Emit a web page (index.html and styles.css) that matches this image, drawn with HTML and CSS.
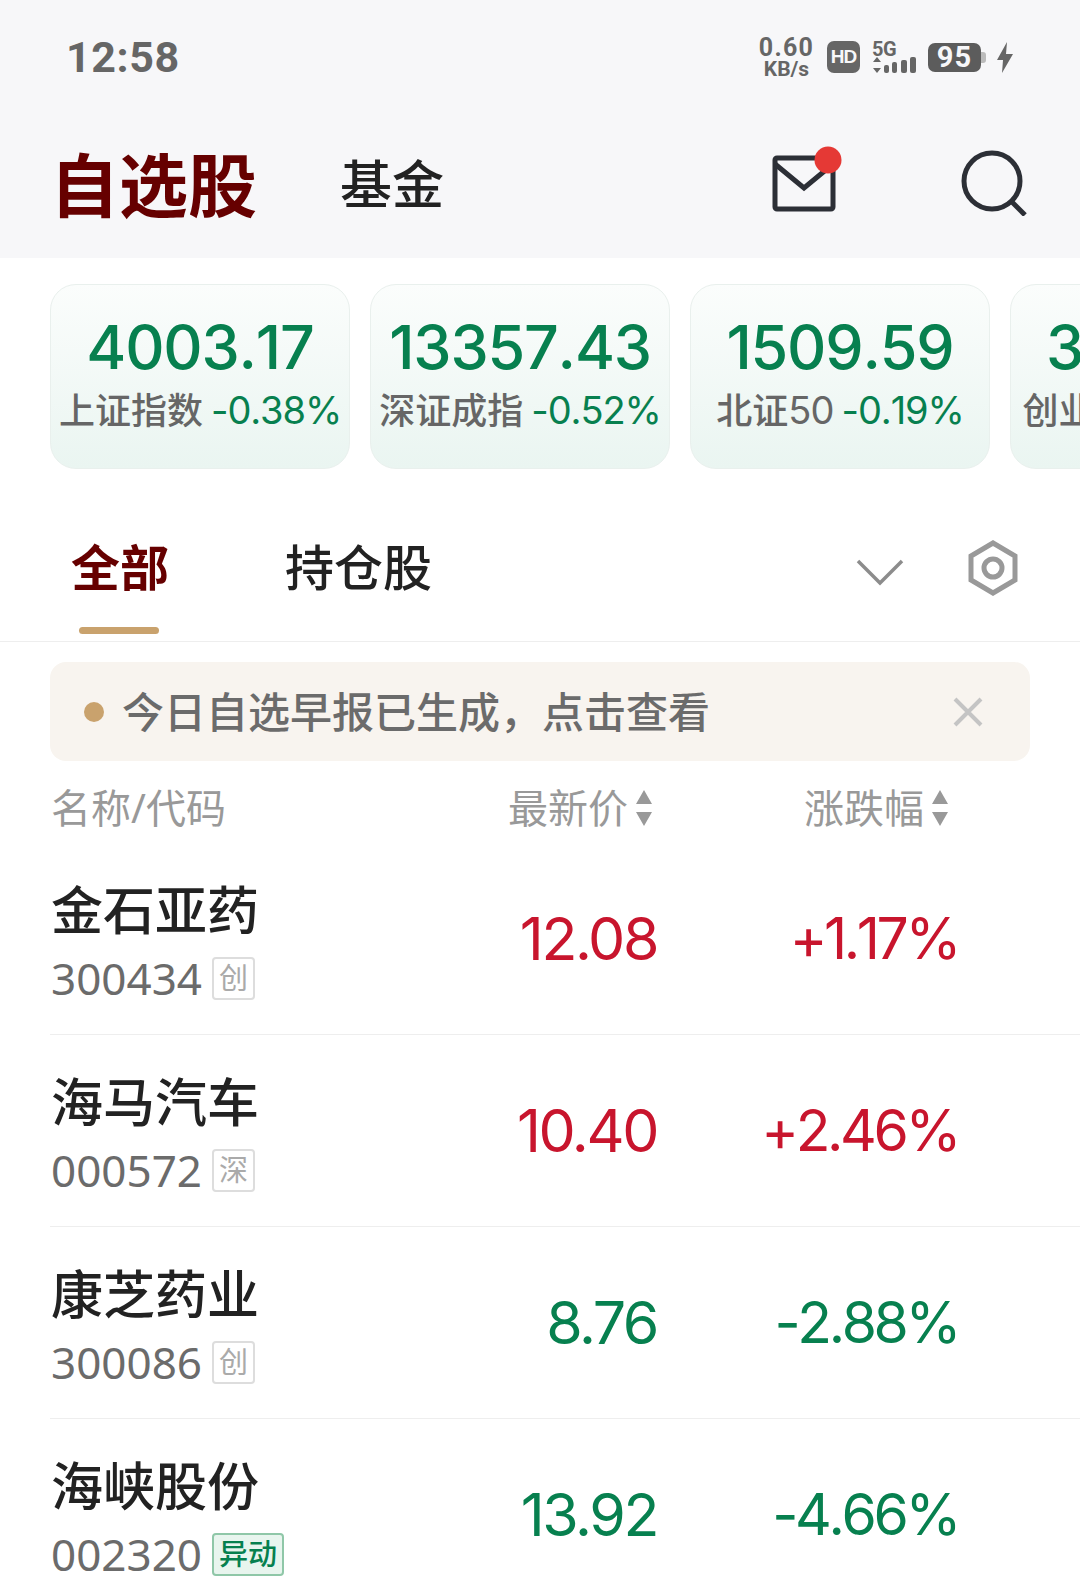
FILE: index.html
```html
<!DOCTYPE html>
<html lang="zh">
<head>
<meta charset="utf-8">
<title>自选股</title>
<link rel="stylesheet" href="styles.css">
</head>
<body>
<div class="page">
  <header class="top">
    <div class="status">
      <span class="time">12:58</span>
      <div class="sys">
        <div class="speed"><span class="speed-a">0.60</span><span class="speed-b">KB/s</span></div>
        <span class="hd">HD</span>
        <div class="net">
          <span class="five">5G</span>
          <svg class="bars" width="44" height="16" viewBox="0 0 44 16"><path class="ic-fill" d="M5 0l4 5H1zM5 16l4-5H1z"/><rect class="ic-fill" x="12" y="8" width="5" height="8" rx="2"/><rect class="ic-fill" x="20" y="5" width="5" height="11" rx="2"/><rect class="ic-fill" x="29" y="3" width="6" height="13" rx="2"/><rect class="ic-fill" x="38" y="0" width="6" height="16" rx="2"/></svg>
        </div>
        <div class="batt"><span class="batt-body">95</span><span class="batt-tip"></span></div>
        <svg class="bolt" width="16" height="31" viewBox="0 0 16 31"><path class="ic-fill" d="M10 0L0 18h6L5 31l11-19H9z"/></svg>
      </div>
    </div>
    <div class="nav">
      <h1 class="title">自选股</h1>
      <span class="fund">基金</span>
      <svg class="mail" width="70" height="66" viewBox="0 0 70 66"><rect class="ic-line" x="3" y="12" width="58" height="51" rx="2"/><path class="ic-line" d="M3 18l29 24 29-24"/><circle class="ic-dot" cx="56" cy="14" r="13.5"/></svg>
      <svg class="search" width="66" height="66" viewBox="0 0 66 66"><circle class="ic-line" cx="31" cy="31" r="28"/><path class="ic-line" d="M50 51l14 14"/></svg>
    </div>
  </header>

  <section class="cards">
    <div class="card"><div class="num">4003.17</div><div class="sub"><span>上证指数</span> <em>-0.38%</em></div></div>
    <div class="card"><div class="num">13357.43</div><div class="sub"><span>深证成指</span> <em>-0.52%</em></div></div>
    <div class="card"><div class="num">1509.59</div><div class="sub"><span>北证<b class="sub-num">50</b></span> <em>-0.19%</em></div></div>
    <div class="card"><div class="num">3198.45</div><div class="sub"><span>创业板指</span> <em>-0.41%</em></div></div>
  </section>

  <nav class="tabs">
    <div class="tab tab-on">全部</div>
    <div class="tab">持仓股</div>
    <svg class="chev" width="48" height="28" viewBox="0 0 48 28"><path d="M2 3l22 22L46 3"/></svg>
    <svg class="hex" width="50" height="56" viewBox="0 0 50 56"><path d="M25 3l22 13v24L25 53 3 40V16z"/><circle cx="25" cy="28" r="9"/></svg>
  </nav>

  <div class="notice">
    <span class="dot"></span>
    <span class="notice-text">今日自选早报已生成，点击查看</span>
    <svg class="close" width="30" height="30" viewBox="0 0 30 30"><path d="M2 2l26 26M28 2L2 28"/></svg>
  </div>

  <div class="grid head">
    <span>名称/代码</span>
    <span class="sort sort-price">最新价<svg width="16" height="36" viewBox="0 0 16 36"><path d="M8 0l8 14H0zM8 36l8-14H0z"/></svg></span>
    <span class="sort sort-pct">涨跌幅<svg width="16" height="36" viewBox="0 0 16 36"><path d="M8 0l8 14H0zM8 36l8-14H0z"/></svg></span>
  </div>

  <div class="grid row">
    <div><div class="name">金石亚药</div><div class="code">300434<span class="tag">创</span></div></div>
    <div class="price up">12.08</div><div class="pct up">+1.17%</div>
  </div>
  <div class="grid row">
    <div><div class="name">海马汽车</div><div class="code">000572<span class="tag">深</span></div></div>
    <div class="price up">10.40</div><div class="pct up">+2.46%</div>
  </div>
  <div class="grid row">
    <div><div class="name">康芝药业</div><div class="code">300086<span class="tag">创</span></div></div>
    <div class="price down">8.76</div><div class="pct down">-2.88%</div>
  </div>
  <div class="grid row">
    <div><div class="name">海峡股份</div><div class="code">002320<span class="tag tag-move">异动</span></div></div>
    <div class="price down">13.92</div><div class="pct down">-4.66%</div>
  </div>
</div>
</body>
</html>
```
FILE: styles.css
```css
* { box-sizing: border-box; }
html, body { margin: 0; padding: 0; background: #fff; }
body { font-family: "Noto Sans", "Noto Sans CJK SC", sans-serif; color: #222; }
.page { width: 1080px; height: 1588px; overflow: hidden; }

.top { background: #f7f7f9; height: 258px; padding: 0 67px 0 50px; }
.status { height: 114px; display: flex; justify-content: space-between; align-items: center; padding-left: 16px; }
.time { font: 700 43px/1 Roboto, sans-serif; color: #666; letter-spacing: .6px; }
.sys { display: flex; align-items: center; color: #666; }
.speed { display: flex; flex-direction: column; align-items: center; width: 55px; font-family: Roboto, sans-serif; font-weight: 700; line-height: 1; }
.speed-a { font-size: 25px; letter-spacing: 1.3px; line-height: 23px; }
.speed-b { font-size: 21px; line-height: 20px; }
.hd { margin-left: 13px; width: 33px; height: 32px; background: #666; color: #f7f7f9; border-radius: 7px; font: 700 19px/32px "Liberation Sans", sans-serif; text-align: center; letter-spacing: -1px; }
.net { margin-left: 12px; display: flex; flex-direction: column; width: 44px; }
.five { font: 700 20px/15px Roboto, sans-serif; letter-spacing: -.5px; }
.bars { display: block; }
.ic-fill { fill: #666; }
.batt { margin-left: 12px; display: flex; align-items: center; }
.batt-body { width: 53px; height: 29px; background: #5c5c5c; border-radius: 7px; color: #f7f7f9; font: 700 29px/29px Roboto, sans-serif; text-align: center; letter-spacing: 1px; }
.batt-tip { width: 5px; height: 11px; background: #bbb; border-radius: 0 3px 3px 0; }
.bolt { margin-left: 11px; }

.nav { display: flex; align-items: center; height: 140px; }
.title { margin: 2px 0 0; font-size: 69px; font-weight: 700; line-height: 80px; color: #660000; }
.fund { margin-left: 83px; font-size: 52px; font-weight: 500; line-height: 60px; color: #222; }
.mail { margin-left: auto; margin-right: 119px; margin-top: -10px; }
.search { margin-top: -2px; margin-right: -14px; }
.ic-line { fill: none; stroke: #2c2f36; stroke-width: 5; }
.ic-dot { fill: #e53935; }

.cards { display: flex; gap: 20px; padding: 26px 0 0 50px; overflow: hidden; }
.card { flex: 0 0 300px; height: 185px; border: 1px solid #e9f0ed; border-radius: 26px; background: linear-gradient(#fbfdfc, #eaf5f1); text-align: center; padding-top: 24px; white-space: nowrap; }
.num { font: 500 61px/76px Inter, sans-serif; font-kerning: none; letter-spacing: -1.2px; color: #07804f; }
.sub { font: 500 36px/46px "Noto Sans CJK SC", sans-serif; color: #666; }
.sub em { font: 400 38px/46px Inter, sans-serif; font-kerning: none; letter-spacing: -1.1px; color: #07804f; }
.sub-num { font: 400 38px/46px Inter, sans-serif; letter-spacing: -1px; }

.tabs { display: flex; align-items: flex-start; height: 173px; border-bottom: 1px solid #eee; padding: 66px 62px 0 71px; }
.tab { font-size: 49px; font-weight: 500; line-height: 64px; color: #222; margin-right: 116px; position: relative; }
.tab-on { font-weight: 700; color: #660000; }
.tab-on::after { content: ""; position: absolute; left: 8px; top: 92px; width: 80px; height: 7px; border-radius: 4px; background: #c9a26d; }
.chev { margin-left: auto; margin-top: 23px; fill: none; stroke: #8c8c8c; stroke-width: 3.5; }
.hex { margin-left: 64px; margin-top: 5px; fill: none; stroke: #999; stroke-width: 5; }

.notice { margin: 20px 50px 0; height: 99px; background: #f8f4ef; border-radius: 16px; display: flex; align-items: center; padding: 0 47px 0 34px; }
.dot { width: 20px; height: 20px; border-radius: 50%; background: #c9a26d; margin-right: 18px; }
.notice-text { font-size: 42px; font-weight: 500; color: #6b6b6b; line-height: 56px; }
.close { margin-left: auto; fill: none; stroke: #c4c4c4; stroke-width: 4; }

.grid { display: grid; grid-template-columns: 1fr 200px 298px; padding: 0 0 0 51px; margin-right: 125px; align-items: center; }
.head { height: 82px; padding-top: 11px; color: #999; font-size: 40px; line-height: 50px; }
.sort { display: flex; align-items: center; justify-content: flex-end; gap: 8px; }
.sort svg { fill: #999; }
.sort-price { margin-right: 5px; }
.sort-pct { margin-right: 7px; }

.row { height: 192px; margin-right: 0; padding-right: 125px; margin-left: 50px; padding-left: 1px; border-bottom: 1px solid #eee; }
.name { font-size: 52px; font-weight: 500; line-height: 66px; color: #222; margin-top: 5px; }
.code { font-size: 44px; line-height: 54px; color: #6b6b6b; display: flex; align-items: center; margin-top: 8px; }
.tag { margin-left: 10px; min-width: 43px; height: 43px; padding: 0 5px; border: 2px solid #ddd; border-radius: 4px; font-size: 29px; line-height: 38px; color: #aaa; text-align: center; }
.tag-move { background: #e8f5ee; border-color: #8fc7a8; color: #07804f; font-weight: 500; white-space: nowrap; }
.price, .pct { font: 400 59px/70px Inter, sans-serif; text-align: right; }
.price { letter-spacing: -2.4px; }
.pct { font-size: 57px; font-kerning: none; letter-spacing: -3.4px; margin-right: -3px; }
.up { color: #c8152d; }
.down { color: #07804f; }
```
